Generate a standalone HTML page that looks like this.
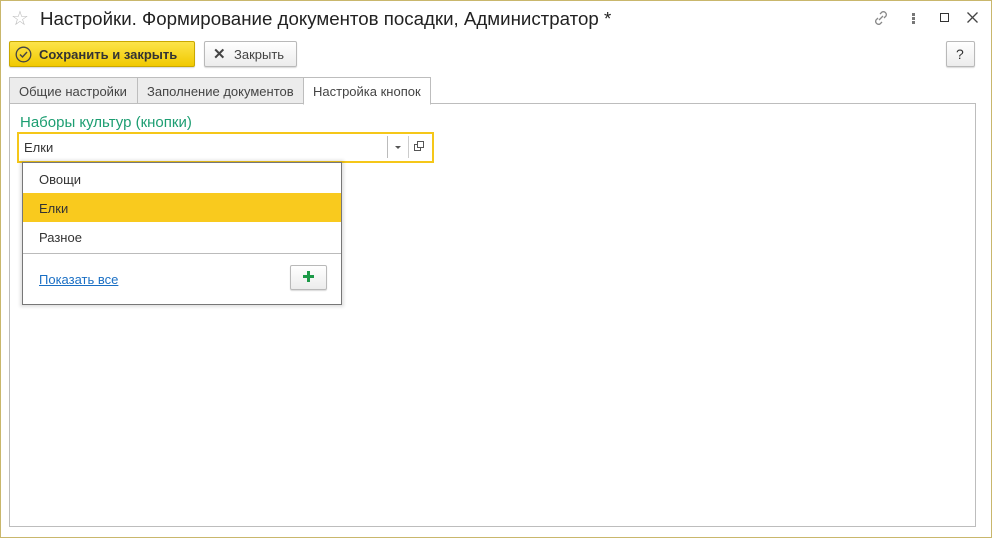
<!DOCTYPE html><html><head><meta charset="utf-8"><style>
*{box-sizing:border-box}body{margin:0;width:992px;height:538px;overflow:hidden;background:#fff;font-family:"Liberation Sans",Arial,sans-serif;font-size:13px;color:#333}
.win{position:absolute;left:0;top:0;width:992px;height:538px;background:#fff}
.frame{position:absolute;left:0;top:0;width:992px;height:538px;border:1px solid #c9b76c;pointer-events:none}
.abs{position:absolute}
.btn{position:absolute;border:1px solid #b9b9b9;border-radius:2px;background:linear-gradient(#fff,#ececec);box-shadow:0 1px 1px rgba(0,0,0,.15)}
.tab{position:absolute;top:77px;height:27px;border:1px solid #bdbdbd;background:#ececec;padding:6px 9px 0;font-size:13px;color:#444}
</style></head><body><div class="win">
<div class="abs" style="left:11px;top:6px;font-size:20px;color:#bbb">☆</div>
<div class="abs" style="left:40px;top:8px;font-size:18.7px;color:#222">Настройки. Формирование документов посадки, Администратор *</div>
<svg class="abs" style="left:872px;top:9px" width="18" height="18" viewBox="0 0 18 18" fill="none" stroke="#888" stroke-width="1.3"><path d="M8 5l2-2a3 3 0 014 4l-2 2M10 13l-2 2a3 3 0 01-4-4l2-2M7 11l4-4"/></svg>
<div class="abs" style="left:912px;top:13px;width:3px;height:3px;background:#777;box-shadow:0 4px 0 #777,0 8px 0 #777"></div>
<div class="abs" style="left:940px;top:13px;width:9px;height:9px;border:1.5px solid #333"></div>
<svg class="abs" style="left:967px;top:12px" width="11" height="11" stroke="#444" stroke-width="1.3"><path d="M0.5 0.5l10 10M10.5 0.5l-10 10"/></svg>
<div class="btn" style="left:9px;top:41px;width:186px;height:26px;background:linear-gradient(#fce44a,#f1c900);border-color:#c9a800"></div>
<svg class="abs" style="left:15px;top:46px" width="17" height="17"><circle cx="8.5" cy="8.5" r="7.3" fill="none" stroke="#444" stroke-width="1.3"/><path d="M5 8.5l2.5 2.5 4.5-5" fill="none" stroke="#444" stroke-width="1.4"/></svg>
<div class="abs" style="left:39px;top:47px;font-weight:bold;color:#333">Сохранить и закрыть</div>
<div class="btn" style="left:204px;top:41px;width:93px;height:26px"></div>
<div class="abs" style="left:213px;top:45px;font-weight:bold;font-size:15px;color:#444">✕</div>
<div class="abs" style="left:234px;top:47px;color:#444">Закрыть</div>
<div class="btn" style="left:946px;top:41px;width:29px;height:26px"></div>
<div class="abs" style="left:956px;top:46px;font-size:14px">?</div>
<div class="abs" style="left:9px;top:103px;width:967px;height:424px;border:1px solid #bdbdbd"></div>
<div class="tab" style="left:9px;width:129px">Общие настройки</div>
<div class="tab" style="left:137px;width:167px">Заполнение документов</div>
<div class="tab" style="left:303px;width:128px;background:#fff;border-bottom-color:#fff;height:28px">Настройка кнопок</div>
<div class="abs" style="left:20px;top:114px;font-size:15px;color:#1d9e72">Наборы культур (кнопки)</div>
<div class="abs" style="left:17px;top:132px;width:417px;height:31px;border:2px solid #f5c719"></div>
<div class="abs" style="left:24px;top:140px;color:#333">Елки</div>
<div class="abs" style="left:387px;top:136px;width:1px;height:22px;background:#bbb"></div>
<div class="abs" style="left:408px;top:136px;width:1px;height:22px;background:#ccc"></div>
<div class="abs" style="left:395px;top:146px;border:3px solid transparent;border-top:3px solid #555;border-bottom:0"></div>
<svg class="abs" style="left:414px;top:141px" width="11" height="11" fill="none" stroke="#555"><rect x="3.5" y="0.5" width="6" height="6"/><path d="M3.5 3.5H0.5v6h6V6.5"/></svg>
<div class="abs" style="left:22px;top:162px;width:320px;height:143px;border:1px solid #777;box-shadow:0 0 3px 2px rgba(0,0,0,.12);background:#fff">
<div class="abs" style="left:16px;top:9px">Овощи</div>
<div class="abs" style="left:0;top:30px;width:318px;height:29px;background:#f9ca1e"></div>
<div class="abs" style="left:16px;top:38px">Елки</div>
<div class="abs" style="left:16px;top:67px">Разное</div>
<div class="abs" style="left:0;top:90px;width:318px;height:1px;background:#bbb"></div>
<div class="abs" style="left:16px;top:109px;color:#1a6fc4;text-decoration:underline">Показать все</div>
<div class="btn" style="left:267px;top:102px;width:37px;height:25px"></div>
<svg class="abs" style="left:280px;top:108px" width="11" height="11"><path d="M5.5 0v11M0 5.5h11" stroke="#1c9a48" stroke-width="3"/></svg>
</div>
</div><div class="frame"></div></body></html>
